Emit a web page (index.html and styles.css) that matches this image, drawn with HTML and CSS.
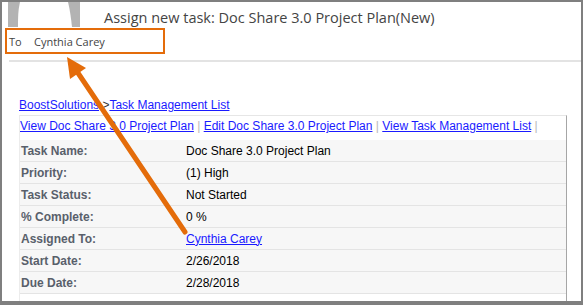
FILE: index.html
```html
<!DOCTYPE html>
<html lang="en">
<head>
    <meta charset="UTF-8">
    <title>Assign new task</title>
    <link rel="stylesheet" href="styles.css">
</head>
<body>
    <div class="frame">
        <div class="mail-header">
            <svg class="avatar" width="72" height="25" viewBox="0 0 72 25">
                <rect width="72" height="25" fill="#b3b3b3"/>
                <path d="M12 0 L60 0 C62 8 63 16 64 25 L10 25 C10 16 10 8 12 0 Z" fill="#fff"/>
            </svg>
            <div class="subject">Assign new task: Doc Share 3.0 Project Plan(New)</div>
        </div>
        <div class="to-line">
            <span class="to-label">To</span>
            <span class="to-name">Cynthia Carey</span>
        </div>
        <div class="divider"></div>

        <div class="mail-body">
            <div class="breadcrumb">
                <a href="#">BoostSolutions</a> &gt;<a href="#">Task Management List</a>
            </div>
            <div class="task-box">
                <div class="actions"><a href="#">View Doc Share 3.0 Project Plan</a> <span class="sep">|</span> <a href="#">Edit Doc Share 3.0 Project Plan</a> <span class="sep">|</span> <a href="#">View Task Management List</a> <span class="sep">|</span></div>
                <table class="task-table">
                    <tr><td class="label">Task Name:</td><td>Doc Share 3.0 Project Plan</td></tr>
                    <tr><td class="label">Priority:</td><td>(1) High</td></tr>
                    <tr><td class="label">Task Status:</td><td>Not Started</td></tr>
                    <tr><td class="label">% Complete:</td><td>0 %</td></tr>
                    <tr><td class="label">Assigned To:</td><td><a href="#">Cynthia Carey</a></td></tr>
                    <tr><td class="label">Start Date:</td><td>2/26/2018</td></tr>
                    <tr><td class="label">Due Date:</td><td>2/28/2018</td></tr>
                </table>
            </div>
        </div>

        <svg class="callout" width="583" height="305" viewBox="0 0 583 305">
            <line x1="185" y1="232" x2="76" y2="70" stroke="#e46c0a" stroke-width="5" stroke-linecap="round"/>
            <polygon points="67,57 86,68 70,79" fill="#e46c0a"/>
        </svg>
    </div>
</body>
</html>
```

FILE: styles.css
```css
body {
    margin: 0;
    padding: 0;
    background-color: #fff;
}
.frame {
    position: relative;
    width: 583px;
    height: 305px;
    box-sizing: border-box;
    border: 2px solid #7f7f7f;
    border-bottom-width: 4px;
    overflow: hidden;
}
.mail-header {
    display: flex;
    align-items: flex-start;
    height: 26px;
}
.avatar {
    margin-left: 6px;
    flex-shrink: 0;
}
.subject {
    margin-left: 24px;
    margin-top: 6px;
    font-family: 'Open Sans', sans-serif;
    font-size: 14.5px;
    color: #444;
    white-space: nowrap;
}
.to-line {
    margin-left: 3px;
    width: 160px;
    height: 26px;
    box-sizing: border-box;
    border: 2px solid #e46c0a;
    display: flex;
    align-items: center;
    font-family: 'Open Sans', sans-serif;
    font-size: 11px;
    color: #444;
}
.to-label {
    margin-left: 2px;
    width: 25px;
}
.divider {
    margin: 6px 0 0 7px;
    height: 2px;
    background-color: #e3e3e3;
}
.mail-body {
    padding: 36px 14px 0 17px;
    font-family: 'Liberation Sans', Arial, sans-serif;
    font-size: 12px;
}
.mail-body a {
    color: #1a1aff;
}
.breadcrumb {
    line-height: 14px;
    color: #333;
}
.task-box {
    margin-top: 3px;
    border-top: 1px solid #e6e6e6;
    border-right: 1px solid #a6a6a6;
    border-left: 1px solid #ececec;
    padding-bottom: 10px;
}
.actions {
    padding: 3px 0 6px 0;
    line-height: 15px;
    white-space: nowrap;
}
.sep {
    color: #b8b8b8;
}
.task-table {
    width: 100%;
    border-collapse: collapse;
    background-color: #f7f7f7;
}
.task-table td {
    height: 21px;
    padding: 0 0 0 1px;
    border-bottom: 1px solid #e4e4e4;
    color: #000;
}
.task-table td.label {
    width: 164px;
    font-weight: bold;
    color: #59606b;
}
.callout {
    position: absolute;
    top: -2px;
    left: -2px;
    pointer-events: none;
}
```
